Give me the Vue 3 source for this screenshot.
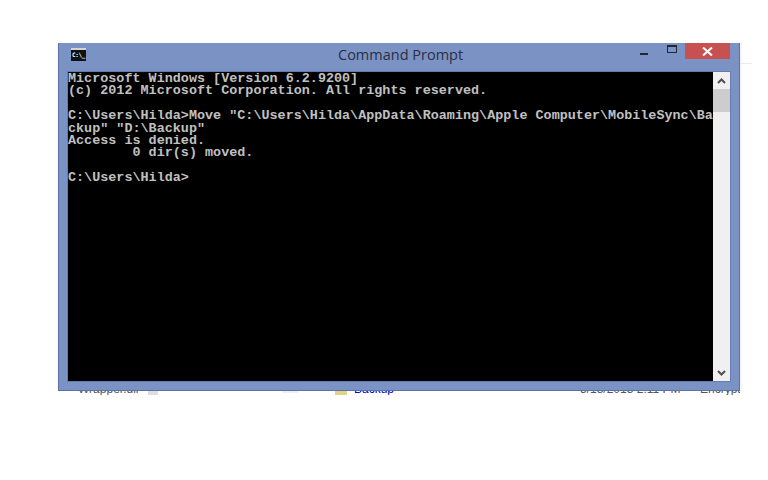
<script setup>
const lines = [
  'Microsoft Windows [Version 6.2.9200]',
  '(c) 2012 Microsoft Corporation. All rights reserved.',
  '',
  'C:\\Users\\Hilda>Move "C:\\Users\\Hilda\\AppData\\Roaming\\Apple Computer\\MobileSync\\Ba',
  'ckup" "D:\\Backup"',
  'Access is denied.',
  '        0 dir(s) moved.',
  '',
  'C:\\Users\\Hilda>',
]
</script>

<template>
  <div class="page">
    <div class="window">
      <div class="titlebar">
        <div class="app-icon"><span>C:\_</span></div>
        <div class="title">Command Prompt</div>
        <div class="controls">
          <button class="ctl min"><i></i></button>
          <button class="ctl max"><i></i></button>
          <button class="close">
            <svg width="11" height="9" viewBox="0 0 11 9"><path d="M1 0.5 L10 8.5 M10 0.5 L1 8.5" stroke="#fff" stroke-width="2" fill="none"/></svg>
          </button>
        </div>
      </div>
      <div class="client">
        <div class="console">
          <div v-for="(l, i) in lines" :key="i" class="row">{{ l }}</div>
        </div>
        <div class="scrollbar">
          <div class="arrow">
            <svg width="9" height="6" viewBox="0 0 9 6"><path d="M1 5 L4.5 1.5 L8 5" stroke="#505050" stroke-width="2" fill="none"/></svg>
          </div>
          <div class="thumb"></div>
          <div class="track"></div>
          <div class="arrow">
            <svg width="9" height="6" viewBox="0 0 9 6"><path d="M1 1 L4.5 4.5 L8 1" stroke="#505050" stroke-width="2" fill="none"/></svg>
          </div>
        </div>
      </div>
    </div>
    <div class="under">
      <span class="u-name">Wrapper.dll</span>
      <span class="u-chip"></span>
      <span class="u-box"></span>
      <span class="u-folder"></span>
      <span class="u-link">Backup</span>
      <span class="u-date">5/18/2013 2:11 PM</span>
      <span class="u-type">Encrypt</span>
    </div>
  </div>
</template>

<style>
html, body { background: #fff; }
</style>

<style scoped>
.page {
  width: 768px;
  height: 480px;
  background: #fff;
  padding: 43px 0 0 58px;
  box-sizing: border-box;
  overflow: hidden;
}
.window {
  width: 682px;
  height: 348px;
  box-sizing: border-box;
  background: #7a92c4;
  border: 1px solid #5d73a3;
  border-top: 0;
  padding: 0 8px 8px 8px;
  display: flex;
  flex-direction: column;
  position: relative;
  z-index: 1;
  box-shadow: 2px 0 0 #f5f5f6, -1px 0 0 #f8f8f8;
}
.window::after {
  content: "";
  position: absolute;
  left: 681px;
  top: 20px;
  width: 12px;
  height: 1px;
  background: #ececec;
}
.titlebar {
  height: 28px;
  flex: none;
  display: flex;
  align-items: flex-start;
  position: relative;
}
.app-icon {
  width: 15px;
  height: 13px;
  margin: 5px 0 0 4px;
  background: #111;
  border-top: 2px solid #cfd3da;
  box-sizing: border-box;
  overflow: hidden;
}
.app-icon span {
  display: block;
  font: bold 6px/10px "DejaVu Sans Mono", monospace;
  color: #fff;
  letter-spacing: -0.4px;
  padding-left: 1px;
}
.title {
  position: absolute;
  left: 271px;
  top: 3px;
  font: 14.5px/18px "Open Sans", sans-serif;
  color: #2b2f3f;
  white-space: nowrap;
}
.controls {
  margin-left: auto;
  margin-right: 1px;
  display: flex;
  align-items: flex-start;
}
.ctl {
  border: 0;
  padding: 0;
  background: none;
  display: block;
}
.min {
  width: 8px;
  height: 14px;
  margin-right: 19px;
}
.min i {
  display: block;
  width: 8px;
  height: 2px;
  margin-top: 8px;
  background: #23272f;
}
.max {
  width: 10px;
  height: 8px;
  margin: 2px 8px 0 0;
}
.max i {
  display: block;
  width: 10px;
  height: 8px;
  box-sizing: border-box;
  border: 1px solid #23272f;
  border-top-width: 2px;
}
.close {
  width: 45px;
  height: 16px;
  border: 0;
  padding: 0;
  background: #c75050;
  display: flex;
  align-items: center;
  justify-content: center;
}
.client {
  flex: 1;
  display: flex;
  min-height: 0;
  border: 1px solid #657cae;
}
.console {
  width: 645px;
  background: #000;
  color: #c0c0c0;
  font: bold 13.4px/12.4px "Liberation Mono", monospace;
  letter-spacing: 0.025px;
  padding-top: 1px;
  overflow: hidden;
}
.row {
  height: 12.4px;
  white-space: pre;
}
.scrollbar {
  width: 17px;
  background: #f0f0f0;
  display: flex;
  flex-direction: column;
}
.arrow {
  height: 17px;
  flex: none;
  display: flex;
  align-items: center;
  justify-content: center;
}
.thumb {
  height: 23px;
  flex: none;
  background: #cdcdcd;
}
.track { flex: 1; }
.under {
  height: 4px;
  width: 682px;
  position: relative;
  overflow: hidden;
  display: flex;
  align-items: flex-start;
}
.under span { display: block; flex: none; }
.u-name, .u-date, .u-type, .u-link {
  font: 12px/12px "Liberation Sans", sans-serif;
  margin-top: -8px;
  white-space: nowrap;
}
.u-name { color: #555; margin-left: 20px; width: 70px; }
.u-chip { width: 10px; height: 4px; background: #ddd; }
.u-box { width: 16px; height: 2px; margin-left: 124px; background: #eee; }
.u-folder { width: 12px; height: 4px; margin-left: 37px; background: #e6d08a; }
.u-link { color: #00c; margin-left: 7px; width: 226px; }
.u-date { color: #555; width: 120px; }
.u-type { color: #555; }
</style>
